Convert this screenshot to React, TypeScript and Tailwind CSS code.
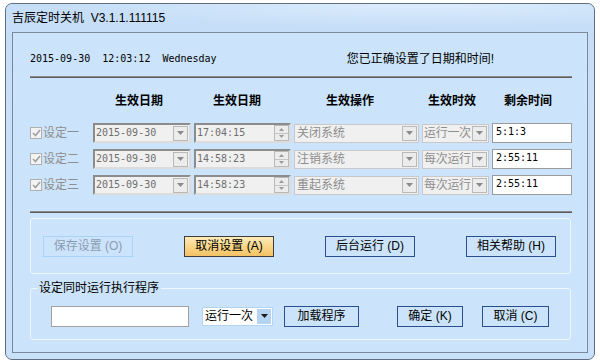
import React from 'react';

const cjk = "font-['Liberation_Sans','Noto_Sans_CJK_SC',sans-serif]";
const mono = "font-['DejaVu_Sans_Mono','Liberation_Mono',monospace]";

function Arrow({ color = '#8a8a8a' }: { color?: string }) {
  return (
    <svg width="7" height="4" viewBox="0 0 7 4">
      <path d="M0 0 L7 0 L3.5 4 Z" fill={color} />
    </svg>
  );
}

function DropBtn() {
  return (
    <div className="flex h-[15px] w-[15px] shrink-0 items-center justify-center border border-[#b9b9b9] bg-[#ececec]">
      <Arrow />
    </div>
  );
}

function Spin() {
  return (
    <div className="flex h-[16px] w-[15px] shrink-0 flex-col border border-[#b9b9b9] bg-[#ececec]">
      <div className="flex flex-1 items-center justify-center border-b border-[#c4c4c4]">
        <svg width="5" height="3" viewBox="0 0 5 3">
          <path d="M0 3 L5 3 L2.5 0 Z" fill="#9a9a9a" />
        </svg>
      </div>
      <div className="flex flex-1 items-center justify-center">
        <svg width="5" height="3" viewBox="0 0 5 3">
          <path d="M0 0 L5 0 L2.5 3 Z" fill="#9a9a9a" />
        </svg>
      </div>
    </div>
  );
}

function Row({ label, time, op, mode, left }: { label: string; time: string; op: string; mode: string; left: string }) {
  return (
    <div className="flex h-[20px] items-center">
      {/* checkbox + label */}
      <div className="flex w-[63px] items-center gap-[1px]">
        <div className="flex h-[12px] w-[12px] items-center justify-center border border-[#b0b0b0] bg-[#f3f3f3]">
          <svg width="9" height="8" viewBox="0 0 9 8">
            <path d="M1 4 L3.5 6.5 L8 1" stroke="#a0a0a0" strokeWidth="1.6" fill="none" />
          </svg>
        </div>
        <span className={`${cjk} whitespace-nowrap text-[12px] leading-[14px] text-[#8e8e8e]`}>{label}</span>
      </div>
      {/* date combo */}
      <div className="flex h-[20px] w-[98px] items-center justify-between border-2 border-t-[#8c8c8c] border-l-[#8c8c8c] border-b-[#dcdcdc] border-r-[#dcdcdc] bg-[#f0f0f0] pl-[1px] pr-[1px]">
        <span className={`${mono} text-[10px] leading-[12px] text-[#6f6f6f]`}>2015-09-30</span>
        <DropBtn />
      </div>
      {/* time spin */}
      <div className="ml-[3px] flex h-[20px] w-[97px] items-center justify-between border-2 border-t-[#8c8c8c] border-l-[#8c8c8c] border-b-[#dcdcdc] border-r-[#dcdcdc] bg-[#f0f0f0] pl-[1px]">
        <span className={`${mono} text-[10px] leading-[12px] text-[#6f6f6f]`}>{time}</span>
        <Spin />
      </div>
      {/* operation combo */}
      <div className="ml-[3px] flex h-[19px] w-[125px] items-center justify-between border border-[#c9c9c9] bg-[#f0f0f0] pl-[2px] pr-[1px]">
        <span className={`${cjk} whitespace-nowrap text-[12px] leading-[14px] text-[#8e8e8e]`}>{op}</span>
        <DropBtn />
      </div>
      {/* mode combo */}
      <div className="ml-[3px] flex h-[19px] w-[67px] items-center justify-between overflow-hidden border border-[#c9c9c9] bg-[#f0f0f0] pl-[1px] pr-[1px]">
        <span className={`${cjk} whitespace-nowrap text-[12px] leading-[14px] tracking-[-0.3px] text-[#8e8e8e]`}>{mode}</span>
        <DropBtn />
      </div>
      {/* remaining time */}
      <div className="ml-[3px] flex h-[20px] w-[80px] items-start border border-[#9a9a9a] bg-white pl-[3px] pt-[2px]">
        <span className={`${mono} text-[10px] leading-[12px] text-black`}>{left}</span>
      </div>
    </div>
  );
}

function BlueButton({ children, w }: { children: React.ReactNode; w: string }) {
  return (
    <div className={`${w} ${cjk} flex h-[21px] items-center justify-center whitespace-nowrap border border-[#2b4f8e] text-[12px] leading-[14px] text-black`}>
      {children}
    </div>
  );
}

export default function App() {
  return (
    <div className="h-[364px] w-[600px] overflow-hidden bg-white pl-[5px] pt-[3px]">
      <div className="h-[357px] w-[590px] rounded-[7px] border border-[#5f6f80] bg-[linear-gradient(180deg,#c4dcf5_0%,#c8e0f8_30%,#c9e1f9_100%)]">
        {/* title bar */}
        <div className="flex h-[28px] items-center rounded-t-[7px] bg-[radial-gradient(ellipse_at_70%_0%,#dcedfd_0%,#c6def7_60%)] pl-[6px]">
          <span className={`${cjk} text-[12px] leading-[14px] text-black`}>吉辰定时关机&nbsp;&nbsp;V3.1.1.111115</span>
        </div>

        {/* inner panel */}
        <div className="ml-[6px] h-[321px] w-[576px] border border-[#7d8998] bg-[#cce4fb] pl-[17px]">
          {/* clock + status */}
          <div className="mt-[18px] flex h-[16px] items-center">
            <span className={`${mono} whitespace-pre text-[10px] leading-[12px] text-black`}>2015-09-30  12:03:12  Wednesday</span>
            <span className={`${cjk} ml-[130px] text-[12px] leading-[14px] text-black`}>您已正确设置了日期和时间!</span>
          </div>

          <div className="mt-[9px] h-[2px] w-[542px] border-t border-b border-t-[#8a8a8a] border-b-[#5c5c5c]" />

          {/* column headers */}
          <div className={`${cjk} mt-[15px] flex h-[16px] items-center text-[12px] font-bold leading-[14px] text-black`}>
            <span className="ml-[85px] w-[48px]">生效日期</span>
            <span className="ml-[50px] w-[48px]">生效日期</span>
            <span className="ml-[65px] w-[48px]">生效操作</span>
            <span className="ml-[54px] w-[48px]">生效时效</span>
            <span className="ml-[28px] w-[48px]">剩余时间</span>
          </div>

          {/* settings rows */}
          <div className="mt-[14px] flex flex-col gap-[6px]">
            <Row label="设定一" time="17:04:15" op="关闭系统" mode="运行一次" left="5:1:3" />
            <Row label="设定二" time="14:58:23" op="注销系统" mode="每次运行" left="2:55:11" />
            <Row label="设定三" time="14:58:23" op="重起系统" mode="每次运行" left="2:55:11" />
          </div>

          <div className="mt-[16px] h-[2px] w-[542px] border-t border-b border-t-[#8a8a8a] border-b-[#5c5c5c]" />

          {/* action buttons group */}
          <div className="mt-[5px] flex h-[56px] w-[541px] items-center gap-[51px] rounded-[3px] border border-[#eef7ff] pl-[12px]">
            <div className={`${cjk} flex h-[21px] w-[90px] items-center justify-center whitespace-nowrap border border-[#a8d2f6] text-[12px] leading-[14px] text-[#8b9cb0]`}>
              保存设置 (O)
            </div>
            <div className={`${cjk} flex h-[21px] w-[90px] items-center justify-center whitespace-nowrap border border-[#3d3d3d] bg-[linear-gradient(180deg,#fdecb8_0%,#f9d68a_50%,#f3c264_100%)] text-[12px] leading-[14px] text-black`}>
              取消设置 (A)
            </div>
            <BlueButton w="w-[90px]">后台运行 (D)</BlueButton>
            <BlueButton w="w-[90px]">相关帮助 (H)</BlueButton>
          </div>

          {/* run program group */}
          <div className="relative mt-[14px] flex h-[52px] w-[541px] items-center rounded-[3px] border border-[#eef7ff] pl-[20px] pt-[4px]">
            <span className={`${cjk} absolute -top-[8px] left-[6px] bg-[#cce4fb] px-[2px] text-[12px] leading-[14px] text-black`}>
              设定同时运行执行程序
            </span>
            <div className="h-[21px] w-[138px] border border-[#a3a3a3] bg-white" />
            <div className="ml-[13px] flex h-[19px] w-[71px] items-center justify-between border border-[#b3d4f3] bg-white pl-[2px] pr-[1px]">
              <span className={`${cjk} whitespace-nowrap text-[12px] leading-[14px] text-black`}>运行一次</span>
              <div className="flex h-[15px] w-[14px] shrink-0 items-center justify-center bg-[#b5d4f3]">
                <Arrow color="#1a1a1a" />
              </div>
            </div>
            <div className="ml-[11px]">
              <BlueButton w="w-[75px]">加载程序</BlueButton>
            </div>
            <div className="ml-[38px]">
              <BlueButton w="w-[66px]">确定 (K)</BlueButton>
            </div>
            <div className="ml-[19px]">
              <BlueButton w="w-[67px]">取消 (C)</BlueButton>
            </div>
          </div>
        </div>
      </div>
    </div>
  );
}
